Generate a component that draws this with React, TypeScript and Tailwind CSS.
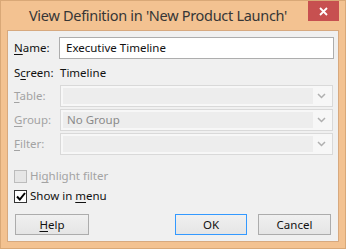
import React from "react";

const font = { fontFamily: '"Noto Sans", "Open Sans", sans-serif' };

function U({ children }: { children: React.ReactNode }) {
  return <span className="underline underline-offset-2">{children}</span>;
}

function Chevron() {
  return (
    <svg width="9" height="6" viewBox="0 0 9 6">
      <path d="M1 1 L4.5 4.5 L8 1" fill="none" stroke="#b0b0b0" strokeWidth="1.5" />
    </svg>
  );
}

function Dropdown({ value }: { value?: string }) {
  return (
    <div className="flex h-[22px] w-[273px] border border-[#d9d9d9] bg-[#f7f7f7] p-[2px]">
      <div className="flex flex-1 items-center bg-[#ededed] pl-[4px] text-[11.5px] text-[#8a8a8a]">
        {value}
      </div>
      <div className="flex w-[17px] items-center justify-center">
        <Chevron />
      </div>
    </div>
  );
}

function Row({ label, children }: { label: React.ReactNode; children: React.ReactNode }) {
  return (
    <div className="flex h-[22px] items-center">
      <div className="w-[46px] text-[11.5px] text-[#a3a3a3]">{label}</div>
      {children}
    </div>
  );
}

function Button({ children, primary, w }: { children: React.ReactNode; primary?: boolean; w: string }) {
  return (
    <div
      className={`flex h-[21px] ${w} items-center justify-center border bg-gradient-to-b from-[#f0f0f0] to-[#e5e5e5] text-[11.5px] text-[#111] ${
        primary ? "border-[#3399ff]" : "border-[#acacac]"
      }`}
    >
      {children}
    </div>
  );
}

export default function App() {
  return (
    <div
      className="flex h-[249px] w-[346px] flex-col border border-[#d9a877] bg-[#f3c291] px-[6px] pb-[6px]"
      style={font}
    >
      <div className="relative flex h-[29px] items-start">
        <div className="absolute left-0 right-[30px] top-[4px] text-center text-[14.5px] text-[#363636] tracking-[-0.3px]">
          View Definition in 'New Product Launch'
        </div>
        <div className="ml-auto flex h-[20px] w-[31px] items-center justify-center bg-[#c75050]">
          <svg width="9" height="9" viewBox="0 0 9 9">
            <path d="M1 1 L8 8 M8 1 L1 8" stroke="#fff" strokeWidth="1.8" />
          </svg>
        </div>
      </div>
      <div className="flex flex-1 flex-col border border-[#d7a97f] bg-[#f0f0f0] pl-[6px]">
        <div className="mt-[6px] flex h-[22px] items-center">
          <div className="w-[45px] text-[11.5px] text-[#111]">
            <U>N</U>ame:
          </div>
          <div className="flex h-[22px] w-[275px] items-center border border-[#adadad] bg-white pl-[6px] text-[11.5px] text-[#111]">
            Executive Timeline
          </div>
        </div>
        <div className="mt-[3px] flex h-[22px] items-center">
          <div className="w-[46px] text-[11.5px] text-[#111]">
            S<U>c</U>reen:
          </div>
          <div className="text-[11.5px] text-[#111]">Timeline</div>
        </div>
        <div className="mt-[1px] flex flex-col gap-[2px]">
          <Row label={<><U>T</U>able:</>}>
            <Dropdown />
          </Row>
          <Row label={<><U>G</U>roup:</>}>
            <Dropdown value="No Group" />
          </Row>
          <Row label={<><U>F</U>ilter:</>}>
            <Dropdown />
          </Row>
        </div>
        <div className="mt-[14px] flex h-[14px] items-center">
          <div className="h-[13px] w-[13px] border border-[#bcbcbc] bg-[#e6e6e6]" />
          <div className="ml-[3px] text-[11.5px] text-[#a3a3a3]">
            Hi<U>g</U>hlight filter
          </div>
        </div>
        <div className="mt-[6px] flex h-[14px] items-center">
          <div className="flex h-[13px] w-[13px] items-center justify-center border border-[#333] bg-white">
            <svg width="10" height="9" viewBox="0 0 10 9">
              <path d="M1 4.5 L3.8 7.5 L9 1" fill="none" stroke="#000" strokeWidth="2" />
            </svg>
          </div>
          <div className="ml-[3px] text-[11.5px] text-[#111]">
            Show in <U>m</U>enu
          </div>
        </div>
        <div className="mt-[11px] flex items-center pl-[1px]">
          <Button w="w-[74px]">
            <U>H</U>elp
          </Button>
          <div className="ml-[86px]">
            <Button w="w-[72px]" primary>
              OK
            </Button>
          </div>
          <div className="ml-[11px]">
            <Button w="w-[73px]">Cancel</Button>
          </div>
        </div>
      </div>
    </div>
  );
}
